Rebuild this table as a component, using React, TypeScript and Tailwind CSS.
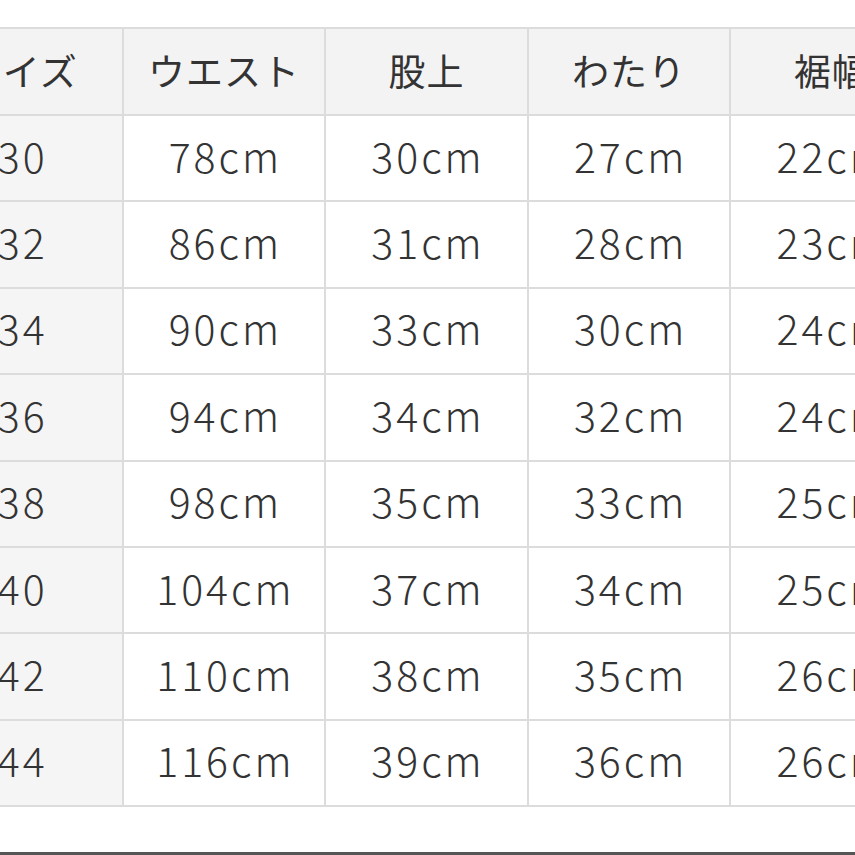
import React from "react";

const headers = ["サイズ", "ウエスト", "股上", "わたり", "裾幅"];

const rows: string[][] = [
  ["30", "78cm", "30cm", "27cm", "22cm"],
  ["32", "86cm", "31cm", "28cm", "23cm"],
  ["34", "90cm", "33cm", "30cm", "24cm"],
  ["36", "94cm", "34cm", "32cm", "24cm"],
  ["38", "98cm", "35cm", "33cm", "25cm"],
  ["40", "104cm", "37cm", "34cm", "25cm"],
  ["42", "110cm", "38cm", "35cm", "26cm"],
  ["44", "116cm", "39cm", "36cm", "26cm"],
];

export default function App() {
  return (
    <div
      className="w-[855px] h-[855px] overflow-hidden bg-white flex flex-col text-[#333333]"
      style={{ fontFamily: '"Noto Sans CJK JP", "Noto Sans", sans-serif' }}
    >
      <div className="flex-1 pt-[27px]">
        <table className="-ml-[81px] border-collapse table-fixed w-[1014px]">
          <thead>
            <tr className="h-[87px]">
              {headers.map((h) => (
                <th
                  key={h}
                  className="w-[202.6px] border-2 border-[#dcdcdc] bg-[#f3f3f3] text-center align-middle text-[37px] font-normal tracking-[1px] leading-none pb-[2px]"
                >
                  {h}
                </th>
              ))}
            </tr>
          </thead>
          <tbody>
            {rows.map((r) => (
              <tr key={r[0]} className="h-[86.4px]">
                {r.map((c, i) => (
                  <td
                    key={i}
                    className={
                      "border-2 border-[#dcdcdc] text-center align-middle text-[41px] font-light tracking-[3px] leading-none pb-[6px] pl-[3px] " +
                      (i === 0 ? "bg-[#f5f5f5]" : "bg-white")
                    }
                  >
                    {c}
                  </td>
                ))}
              </tr>
            ))}
          </tbody>
        </table>
      </div>
      <div className="h-[3px] bg-[#555555]" />
    </div>
  );
}
